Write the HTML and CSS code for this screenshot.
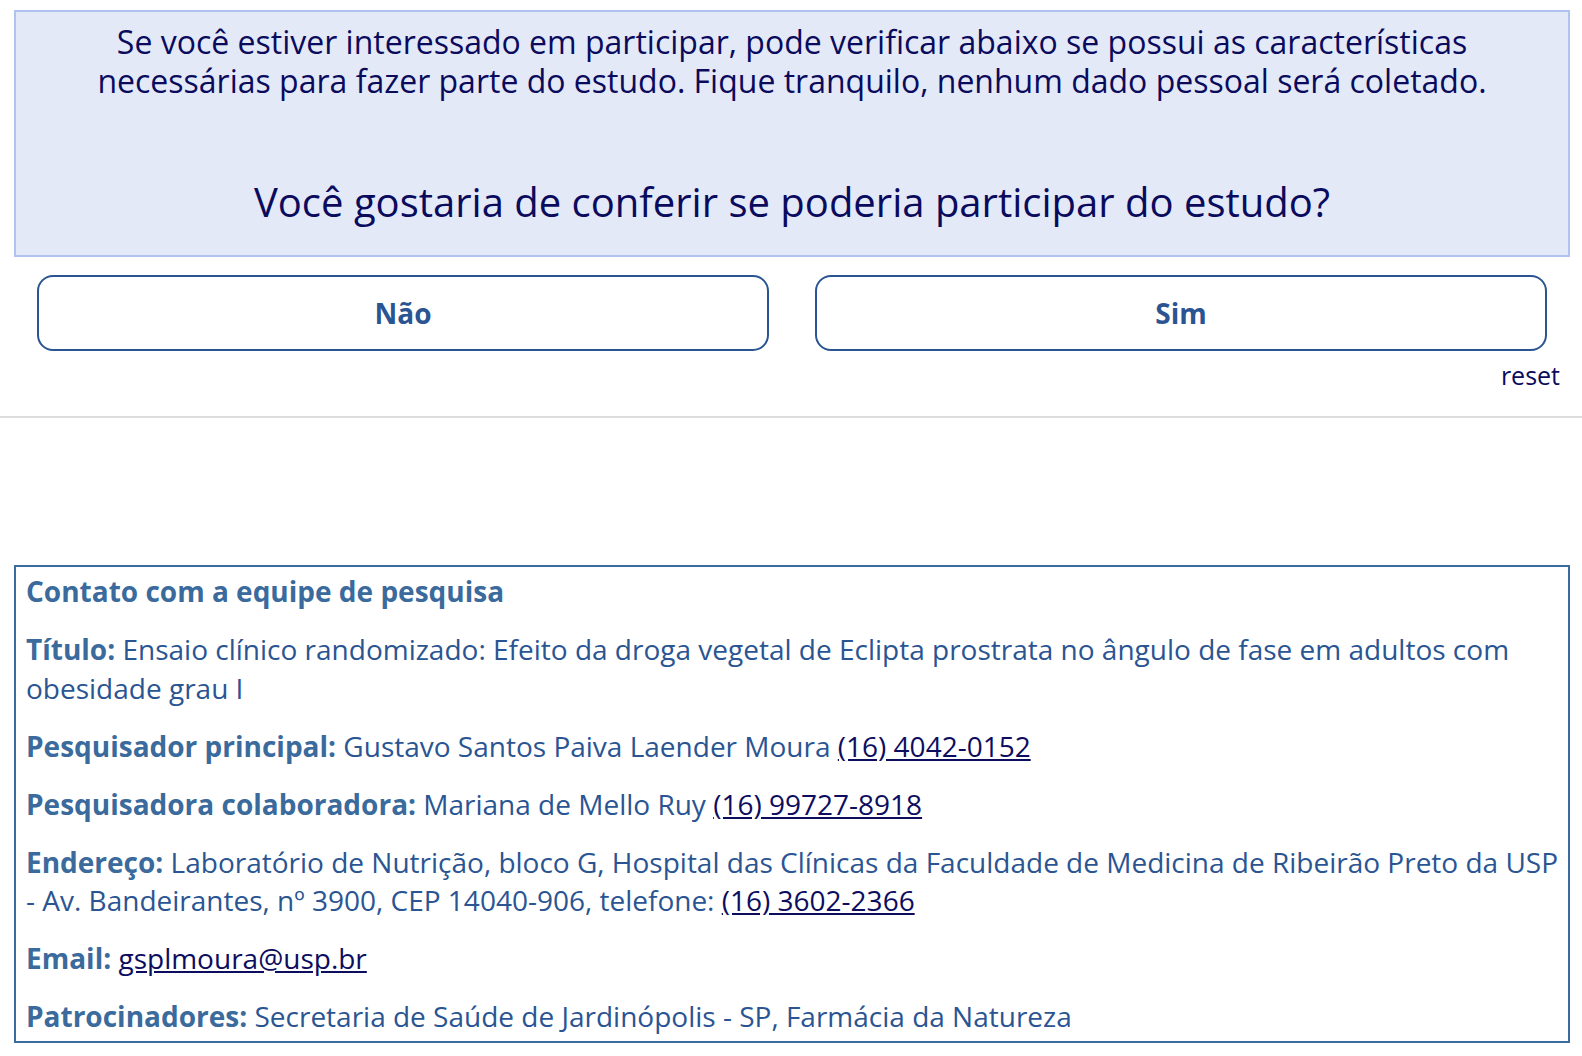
FILE: index.html
```html
<!DOCTYPE html>
<html lang="pt-BR">
<head>
<meta charset="utf-8">
<title>Estudo</title>
<link rel="stylesheet" href="styles.css">
</head>
<body>
<section class="intro">
  <div class="intro-box">
    <p class="intro-text">Se você estiver interessado em participar, pode verificar abaixo se possui as características necessárias para fazer parte do estudo. Fique tranquilo, nenhum dado pessoal será coletado.</p>
    <h2 class="question">Você gostaria de conferir se poderia participar do estudo?</h2>
  </div>
  <div class="choices">
    <button class="choice">Não</button>
    <button class="choice">Sim</button>
  </div>
  <div class="reset-row"><a class="reset">reset</a></div>
</section>
<hr class="divider">
<section class="contact-wrap">
  <div class="contact">
    <p class="contact-title">Contato com a equipe de pesquisa</p>
    <p><b>Título:</b> Ensaio clínico randomizado: Efeito da droga vegetal de Eclipta prostrata no ângulo de fase em adultos com obesidade grau I</p>
    <p><b>Pesquisador principal:</b> Gustavo Santos Paiva Laender Moura <a href="#">(16) 4042-0152</a></p>
    <p><b>Pesquisadora colaboradora:</b> Mariana de Mello Ruy <a href="#">(16) 99727-8918</a></p>
    <p><b>Endereço:</b> Laboratório de Nutrição, bloco G, Hospital das Clínicas da Faculdade de Medicina de Ribeirão Preto da USP - Av. Bandeirantes, nº 3900, CEP 14040-906, telefone: <a href="#">(16) 3602-2366</a></p>
    <p><b>Email:</b> <a href="#">gsplmoura@usp.br</a></p>
    <p><b>Patrocinadores:</b> Secretaria de Saúde de Jardinópolis - SP, Farmácia da Natureza</p>
  </div>
</section>
</body>
</html>
```
FILE: styles.css
```css
* { box-sizing: border-box; }
html, body { margin: 0; padding: 0; background: #fff; }
body { font-family: "Open Sans", "Noto Sans", sans-serif; }

.intro { padding: 10px 12px 0 14px; }

.intro-box {
  background: #e3e9f7;
  border: 2px solid #aec3ee;
  padding: 11px 20px 29px;
  text-align: center;
  color: #0b0b5e;
}
.intro-text {
  margin: 0;
  font-size: 32px;
  line-height: 38.5px;
  padding: 0 40px;
}
.question {
  margin: 78px 0 0;
  font-size: 40px;
  font-weight: 400;
  line-height: 48px;
}

.choices {
  display: flex;
  gap: 46px;
  padding: 0 23px;
  margin-top: 18px;
}
.choice {
  flex: 1;
  height: 76px;
  background: #fff;
  border: 2px solid #2a5592;
  border-radius: 16px;
  font-family: "Open Sans", "Noto Sans", sans-serif;
  font-weight: 700;
  font-size: 28px;
  color: #2b5592;
  cursor: pointer;
}

.reset-row {
  display: flex;
  justify-content: flex-end;
  padding-right: 10px;
  margin-top: 7px;
}
.reset {
  font-size: 25px;
  line-height: 34px;
  color: #0b0b5e;
}

.divider {
  border: 0;
  height: 2px;
  background: #dcdcdc;
  margin: 24px 0 0;
}

.contact-wrap { padding: 147px 12px 0 14px; }

.contact {
  border: 2px solid #3d6b9e;
  padding: 5px 6px 5px 10px;
  color: #2a5592;
  font-size: 28px;
  line-height: 38.5px;
}
.contact p { margin: 19.5px 0 0; }
.contact p.contact-title { margin-top: 0; font-weight: 700; color: #3b6a9c; }
.contact b { font-weight: 700; color: #3b6a9c; }
.contact a { color: #0d0d60; text-decoration: underline; }
```
